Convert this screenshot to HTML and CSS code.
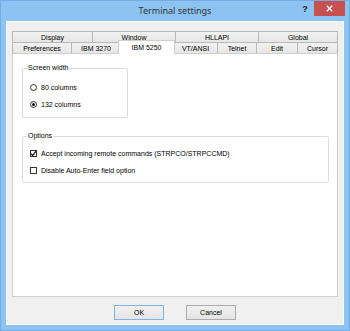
FILE: index.html
```html
<!DOCTYPE html>
<html>
<head>
<meta charset="utf-8">
<link rel="stylesheet" href="styles.css">
</head>
<body>
<div class="window">
  <div class="titlebar">
    <div></div>
    <div class="title">Terminal settings</div>
    <div class="caption-btns">
      <span class="help">?</span>
      <span class="close"><svg width="7" height="7" viewBox="0 0 7 7"><path d="M0.8 0.8 L6.2 6.2 M6.2 0.8 L0.8 6.2" stroke="#fff" stroke-width="1.5"/></svg></span>
    </div>
  </div>
  <div class="client">
    <div class="tabs">
      <div class="tab-row row-back">
        <div class="tab">Display</div>
        <div class="tab">Window</div>
        <div class="tab">HLLAPI</div>
        <div class="tab">Global</div>
      </div>
      <div class="tab-row row-front">
        <div class="tab">Preferences</div>
        <div class="tab">IBM 3270</div>
        <div class="tab active">IBM 5250</div>
        <div class="tab">VT/ANSI</div>
        <div class="tab">Telnet</div>
        <div class="tab">Edit</div>
        <div class="tab">Cursor</div>
      </div>
    </div>
    <div class="panel">
      <fieldset class="group group-width">
        <legend>Screen width</legend>
        <div class="opts">
          <div class="option"><span class="radio"></span>80 columns</div>
          <div class="option"><span class="radio checked"></span>132 columns</div>
        </div>
      </fieldset>
      <fieldset class="group group-options">
        <legend>Options</legend>
        <div class="opts">
          <div class="option"><span class="check checked"><svg width="7" height="7" viewBox="0 0 7 7"><path d="M1 3.6 L2.7 5.4 L6 1.2" stroke="#222" stroke-width="1.3" fill="none"/></svg></span>Accept incoming remote commands (STRPCO/STRPCCMD)</div>
          <div class="option"><span class="check"></span>Disable Auto-Enter field option</div>
        </div>
      </fieldset>
    </div>
    <div class="buttons">
      <button class="btn default">OK</button>
      <button class="btn">Cancel</button>
    </div>
  </div>
</div>
</body>
</html>
```
FILE: styles.css
```css
* { box-sizing: border-box; }
html, body { margin: 0; padding: 0; }
body {
  font-family: "Liberation Sans", Arial, sans-serif;
  font-size: 7px;
  color: #000;
  background: #8cc3f2;
}
.window {
  width: 350px;
  height: 331px;
  border: 1px solid #74ade3;
  background: #8cc3f2;
  display: flex;
  flex-direction: column;
}
.titlebar {
  height: 20px;
  display: grid;
  grid-template-columns: 1fr auto 1fr;
  align-items: start;
}
.title {
  font-family: "Noto Sans", "Open Sans", sans-serif;
  font-size: 9px;
  color: #333;
  line-height: 20px;
  white-space: nowrap;
}
.caption-btns {
  display: flex;
  justify-content: flex-end;
  padding-right: 4px;
}
.help {
  width: 18px;
  height: 15px;
  display: flex;
  align-items: center;
  justify-content: center;
  font-family: "Liberation Sans", sans-serif;
  font-weight: bold;
  font-size: 9px;
  color: #222;
}
.close {
  width: 31px;
  height: 15px;
  background: #c75050;
  display: flex;
  align-items: center;
  justify-content: center;
}
.close svg { display: block; }
.client {
  flex: 1;
  margin: 0 5px 5px 5px;
  background: #f0f0f0;
  border: 1px solid #f7f9fb;
  padding: 9px 5px 4px 5px;
  display: flex;
  flex-direction: column;
}
.tabs { display: flex; flex-direction: column; }
.tab-row { display: grid; height: 11px; }
.row-back { grid-template-columns: 80px 83px 83px 80px; }
.row-front { grid-template-columns: 59px 49px 53px 44px 39px 41px 41px; }
.tab {
  border-top: 1px solid #b9b9b9;
  border-left: 1px solid #b9b9b9;
  background: linear-gradient(#f2f2f2, #e6e6e6);
  display: flex;
  align-items: center;
  justify-content: center;
  line-height: 1;
  white-space: nowrap;
}
.tab:last-child { border-right: 1px solid #b9b9b9; }
.tab.active {
  background: #fff;
  border: 1px solid #cfcfcf;
  border-bottom: none;
  margin: -2px -2px -1px -2px;
  position: relative;
  z-index: 2;
  padding-bottom: 1px;
}
.panel {
  flex: 1;
  background: #fff;
  border: 1px solid #cfcfcf;
  padding: 10px 8px 0 9px;
}
.group {
  margin: 0;
  border: 1px solid #dcdcdc;
  border-radius: 2px;
  padding: 9px 0 7px 7px;
  min-width: 0;
}
.group legend {
  margin-left: -3px;
  padding: 0 1px;
  line-height: 8px;
  font-size: 7px;
}
.group-width { width: 106px; }
.group-options {
  margin-top: 14px;
  padding-top: 7px;
  padding-bottom: 6px;
}
.opts { display: flex; flex-direction: column; gap: 5px; }
.option {
  height: 12px;
  display: flex;
  align-items: center;
  white-space: nowrap;
}
.radio {
  width: 7px;
  height: 7px;
  border: 1px solid #333;
  border-radius: 50%;
  background: #fff;
  margin-right: 4px;
  display: flex;
  align-items: center;
  justify-content: center;
}
.radio.checked::after {
  content: "";
  width: 3px;
  height: 3px;
  border-radius: 50%;
  background: #111;
}
.check {
  width: 7px;
  height: 7px;
  border: 1px solid #333;
  background: #fff;
  margin-right: 4px;
  display: flex;
  align-items: center;
  justify-content: center;
  overflow: visible;
}
.check svg { display: block; flex: none; }
.buttons {
  margin-top: 8px;
  display: flex;
  justify-content: center;
  gap: 22px;
}
.btn {
  width: 50px;
  height: 15px;
  padding: 0;
  margin: 0;
  font-family: "Liberation Sans", Arial, sans-serif;
  font-size: 7px;
  color: #000;
  border: 1px solid #acacac;
  background: linear-gradient(#f0f0f0, #e5e5e5);
}
.btn.default { border-color: #7eb4ea; }
```
